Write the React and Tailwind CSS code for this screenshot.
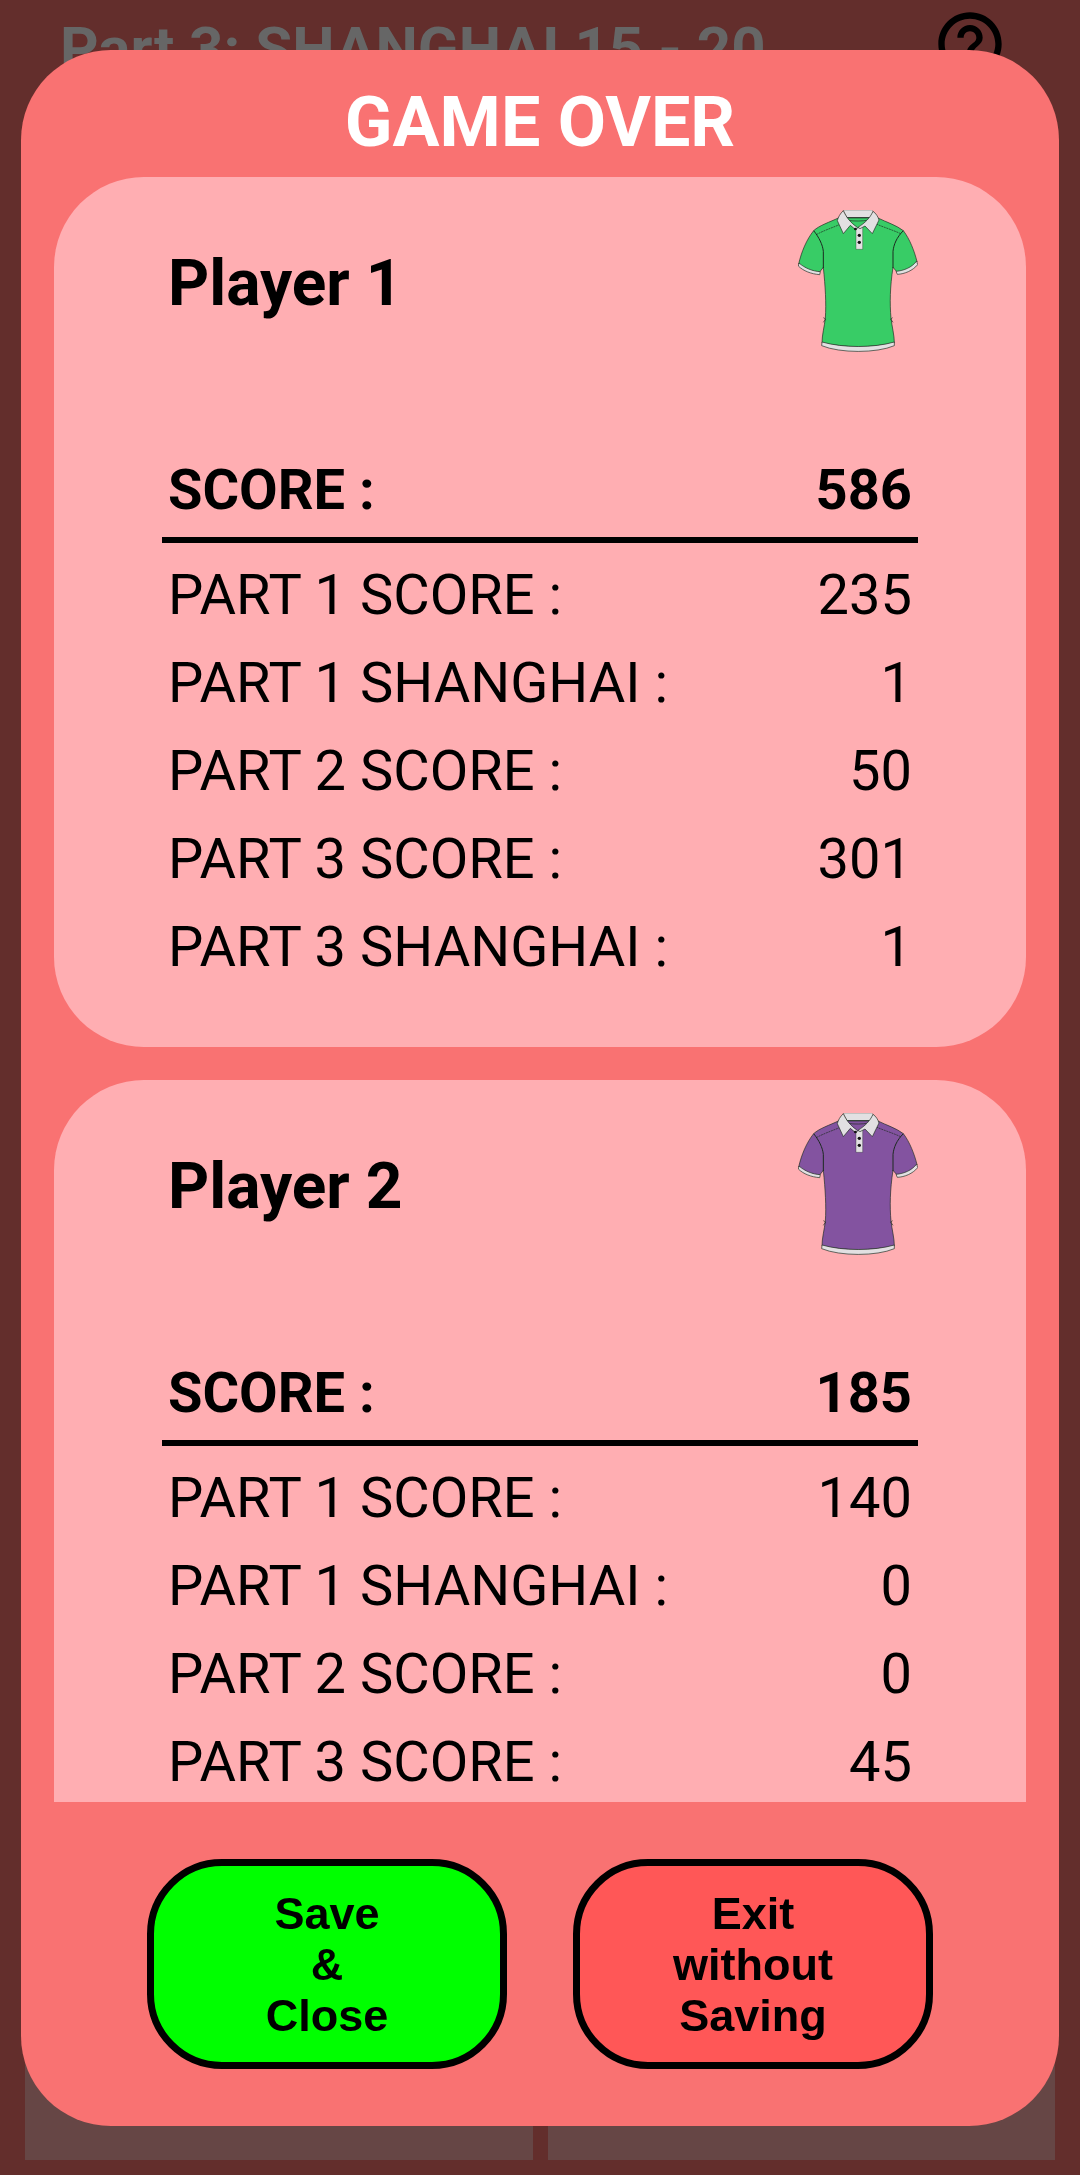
import React from "react";
import { MdHelpOutline } from "react-icons/md";

const players = [
  {
    name: "Player 1",
    shirt: "#38cc66",
    score: 586,
    rows: [
      ["PART 1 SCORE :", 235],
      ["PART 1 SHANGHAI :", 1],
      ["PART 2 SCORE :", 50],
      ["PART 3 SCORE :", 301],
      ["PART 3 SHANGHAI :", 1],
    ],
  },
  {
    name: "Player 2",
    shirt: "#8353a0",
    score: 185,
    rows: [
      ["PART 1 SCORE :", 140],
      ["PART 1 SHANGHAI :", 0],
      ["PART 2 SCORE :", 0],
      ["PART 3 SCORE :", 45],
    ],
  },
];

function Shirt({ color }) {
  return (
    <svg
      viewBox="54 60 360 426"
      className="h-[142px] w-[120px] shrink-0"
      fill="none"
      stroke="#1c2a20"
      strokeWidth="2"
      strokeLinejoin="round"
      aria-hidden="true"
    >
      {/* body and sleeves */}
      <path
        fill={color}
        d="M175 84 C150 96 118 106 101 122 C80 148 64 186 56 222 C74 238 98 246 119 246 L130 232 C136 290 139 340 136 385 C133 410 126 436 126 458 C190 474 280 474 343 458 C343 436 336 410 333 385 C329 340 330 290 339 232 L351 246 C372 246 396 236 411 215 C404 186 390 148 370 122 C350 106 318 96 294 84 L268 80 H202 Z"
      />
      {/* sleeve cuffs */}
      <path fill="#e2e0e2" d="M57 219 C74 234 98 244 121 245 L119 254 C94 252 70 243 55 228 Z" />
      <path fill="#e2e0e2" d="M410 213 C396 232 372 242 348 244 L352 253 C374 252 398 242 413 224 Z" />
      {/* hem */}
      <path fill="#e2e0e2" d="M126 456 C190 474 280 474 343 456 L343 467 C290 490 180 490 125 467 Z" />
      {/* shoulder and armhole seams */}
      <path d="M101 122 C117 142 128 164 130 184 V234 M370 122 C350 142 341 164 339 184 V234" strokeWidth="3" />
      <path d="M109 134 C130 122 155 114 178 104 M362 131 C338 120 312 112 291 103" strokeDasharray="6 2" />
      {/* waist creases */}
      <path d="M130 383 L137 387 L130 397 M338 383 L332 387 L339 397" />
      {/* placket */}
      <path fill="#e2e0e2" strokeWidth="1" d="M228 116 L248 108 V178 H228 Z" />
      {/* neck band */}
      <path fill="#e2e0e2" strokeWidth="1" d="M190 62 L194 60 H275 L279 64 L272 84 H202 Z" />
      <path d="M198 83 H272" strokeWidth="3" />
      <path d="M204 91 C222 94 248 94 266 90" strokeWidth="2" />
      {/* collar */}
      <path fill="#e2e0e2" d="M190 62 C181 70 174 82 172 92 L190 131 L211 106 L228 120 L232 112 C212 98 200 84 190 62 Z" />
      <path fill="#e2e0e2" d="M279 64 C288 70 294 80 297 90 L277 131 L255 108 L240 116 L234 112 C256 98 270 84 279 64 Z" />
      <g fill="#111" stroke="none">
        <circle cx="226" cy="117" r="4" />
        <circle cx="238" cy="136" r="5" />
        <circle cx="238" cy="157" r="5" />
      </g>
    </svg>
  );
}

function PlayerCard({ player }) {
  return (
    <section className="min-h-[870px] shrink-0 rounded-[90px] bg-[#ffaeb2] px-[108px] pt-[33px] pb-14">
      <div className="flex items-center justify-between">
        <h2 className="pt-1.5 pl-1.5 text-[64px] leading-[76px] font-bold">{player.name}</h2>
        <Shirt color={player.shirt} />
      </div>
      <table className="mt-[91px] w-full border-separate border-spacing-0 text-[56px] leading-[66px]">
        <thead>
          <tr>
            <th scope="row" className="h-[100px] border-b-[6px] border-black px-1.5 py-0 text-left font-bold">
              SCORE :
            </th>
            <td className="h-[100px] border-b-[6px] border-black px-1.5 py-0 text-right font-bold">
              {player.score}
            </td>
          </tr>
        </thead>
        <tbody className="[&>tr:first-child>*]:h-24 [&>tr:first-child>*]:pt-2">
          {player.rows.map(([label, value]) => (
            <tr key={label}>
              <th scope="row" className="h-[88px] px-1.5 py-0 text-left font-normal">
                {label}
              </th>
              <td className="h-[88px] px-1.5 py-0 text-right">{value}</td>
            </tr>
          ))}
        </tbody>
      </table>
    </section>
  );
}

export default function App() {
  return (
    <div className="flex h-screen flex-col justify-between bg-[#632e2c] font-['Roboto',sans-serif] text-black">
      <header className="flex items-start justify-between pt-1.5 pr-[72px] pl-[60px]">
        <h1 className="pt-2 text-[60px] leading-[70px] font-bold text-[#666666]">Part 3: SHANGHAI 15 - 20</h1>
        <button type="button" aria-label="Help">
          <MdHelpOutline className="size-[76px]" />
        </button>
      </header>
      <div className="grid h-60 grid-cols-2 gap-[15px] px-[25px] pb-[15px]">
        <div className="bg-[#664645]" />
        <div className="bg-[#664645]" />
      </div>

      <div
        role="dialog"
        aria-modal="true"
        aria-labelledby="dialog-title"
        className="fixed inset-x-[21px] top-[50px] bottom-[49px] flex flex-col overflow-hidden rounded-[90px] bg-[#f97272]"
      >
        <h2 id="dialog-title" className="pt-[30px] pb-[13px] text-center text-[70px] leading-[84px] font-bold text-white">
          GAME OVER
        </h2>
        <div className="mx-[33px] flex min-h-0 flex-1 flex-col gap-[33px] overflow-y-auto [scrollbar-width:none]">
          {players.map((player) => (
            <PlayerCard key={player.name} player={player} />
          ))}
        </div>
        <div className="flex justify-center gap-[66px] py-[57px] font-['Liberation_Sans',Arial,sans-serif] text-[45px] leading-[51px] font-bold">
          <button type="button" className="h-[210px] w-[360px] rounded-[75px] border-[7px] border-black bg-[#00ff00]">
            Save
            <br />
            &amp;
            <br />
            Close
          </button>
          <button type="button" className="h-[210px] w-[360px] rounded-[75px] border-[7px] border-black bg-[#ff5757]">
            Exit
            <br />
            without
            <br />
            Saving
          </button>
        </div>
      </div>
    </div>
  );
}
